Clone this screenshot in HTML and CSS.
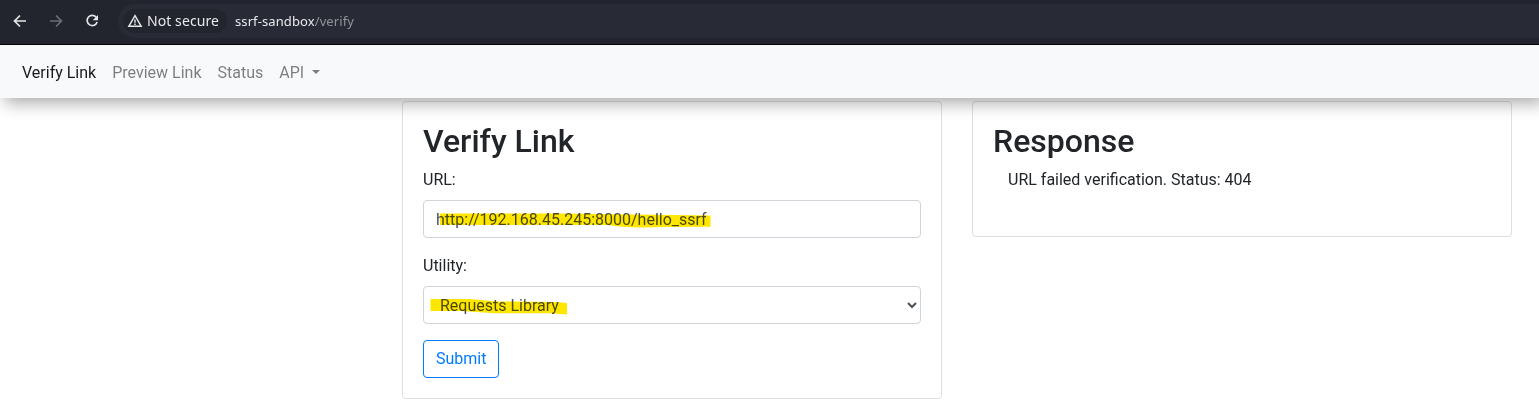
FILE: index.html
```html
<!DOCTYPE html>
<html lang="en">
<head>
<meta charset="utf-8">
<title>Verify Link</title>
<link rel="stylesheet" href="styles.css">
</head>
<body>
<header class="browser">
  <div class="controls">
    <svg class="icon" viewBox="0 0 16 16"><path d="M14 8H3M8 2.5 2.5 8 8 13.5"/></svg>
    <svg class="icon dim" viewBox="0 0 16 16"><path d="M2 8h11M8 2.5 13.5 8 8 13.5"/></svg>
    <svg class="icon" viewBox="0 0 16 16"><path d="M12.4 4.5A5.1 5.1 0 1 0 13.1 9"/><path class="solid" d="M14 2v5.3H8.7z"/></svg>
  </div>
  <div class="address">
    <span class="security">
      <svg class="warn" viewBox="0 0 16 16"><path d="M8 2.6 14.2 13.3H1.8z"/><path d="M8 6.4v3.3M8 10.6v1.3"/></svg>
      <span>Not secure</span>
    </span>
    <span class="location">ssrf-sandbox<span class="path">/verify</span></span>
  </div>
</header>
<nav class="navbar">
  <a class="link active">Verify Link</a>
  <a class="link">Preview Link</a>
  <a class="link">Status</a>
  <a class="link dropdown">API</a>
</nav>
<main class="content">
  <section class="card">
    <h2>Verify Link</h2>
    <label for="url">URL:</label>
    <div class="field">
      <input id="url" class="control" type="text" value="http://192.168.45.245:8000/hello_ssrf">
      <svg class="marker" viewBox="0 0 498 38"><path d="M17 13.5H140L210 14.5 287.5 15.5V26.8L240 27Q202 28.5 185 25H17z"/></svg>
    </div>
    <label for="utility">Utility:</label>
    <div class="field">
      <select id="utility" class="control"><option>Requests Library</option></select>
      <svg class="marker" viewBox="0 0 498 38"><path d="M7.5 13 47 13 74 15.5 133 16 144 17V28.5L128 27.2H72L38 25H7.5z"/></svg>
    </div>
    <button class="submit" type="button">Submit</button>
  </section>
  <section class="card response">
    <h2>Response</h2>
    <p>URL failed verification. Status: 404</p>
  </section>
</main>
</body>
</html>
```
FILE: styles.css
```css
* { box-sizing: border-box; }
body {
  margin: 0;
  height: 418px;
  overflow: hidden;
  background: #fff;
  color: #212529;
  font: 16px/24px Roboto, sans-serif;
}
.browser {
  position: relative;
  z-index: 2;
  display: flex;
  height: 45px;
  padding: 4px 0 6px 12px;
  background: #22242e;
  border-bottom: 1px solid #050507;
  color: #e9e9ec;
  font-family: "Noto Sans", sans-serif;
}
.controls { display: flex; align-items: center; gap: 20px; width: 106px; }
.icon { width: 16px; height: 16px; fill: none; stroke: #e6e6e8; stroke-width: 1.7; }
.icon.dim { stroke: #6c6d75; }
.icon .solid { fill: #e6e6e8; stroke: none; }
.address {
  display: flex;
  align-items: center;
  flex: 1;
  gap: 8px;
  padding-left: 5px;
  background: #282a35;
  border-radius: 17px 0 0 17px;
}
.security {
  display: flex;
  align-items: center;
  gap: 4px;
  width: 104px;
  height: 24px;
  padding-left: 4px;
  border-radius: 12px;
  background: #22242e;
  font-size: 14px;
  letter-spacing: .08px;
  white-space: nowrap;
}
.warn { width: 16px; height: 16px; fill: none; stroke: #e9e9ec; stroke-width: 1.4; }
.location { font-size: 13px; letter-spacing: .1px; }
.path { color: #92939a; }
.navbar {
  position: relative;
  z-index: 1;
  display: flex;
  align-items: center;
  gap: 16px;
  height: 53px;
  padding: 2px 22px 0;
  background: #f8f9fa;
  box-shadow: 5px 5px 16px rgba(0, 0, 0, .34);
}
.link { color: rgba(0, 0, 0, .5); }
.link.active { color: rgba(0, 0, 0, .9); }
.dropdown::after {
  content: "";
  display: inline-block;
  margin-left: 8px;
  vertical-align: 4px;
  border: 4.8px solid transparent;
  border-top-color: currentColor;
  border-bottom: 0;
}
.content {
  display: grid;
  grid-template-columns: 540px 540px;
  gap: 30px;
  align-items: start;
  margin: 3px 0 0 402px;
}
.card { height: 298px; padding: 20px; border: 1px solid #dfdfdf; border-radius: 4px; }
.response { height: 136px; }
h2 { margin: 0 0 8px; font-size: 32px; line-height: 38px; font-weight: 500; }
label { display: block; margin-bottom: 8px; }
.field { position: relative; height: 38px; margin-bottom: 16px; }
.control {
  display: block;
  width: 100%;
  height: 38px;
  padding: 6px 12px;
  border: 1px solid #ced4da;
  border-radius: 4px;
  background: #fff;
  color: #495057;
  font: inherit;
}
.marker {
  position: absolute;
  inset: 0;
  width: 498px;
  height: 38px;
  fill: #ffe600;
  mix-blend-mode: multiply;
  pointer-events: none;
}
.submit {
  display: block;
  height: 38px;
  padding: 6px 12px;
  border: 1px solid #007bff;
  border-radius: 4px;
  background: transparent;
  color: #007bff;
  font: inherit;
}
p { margin: 0 0 0 15px; }
```
